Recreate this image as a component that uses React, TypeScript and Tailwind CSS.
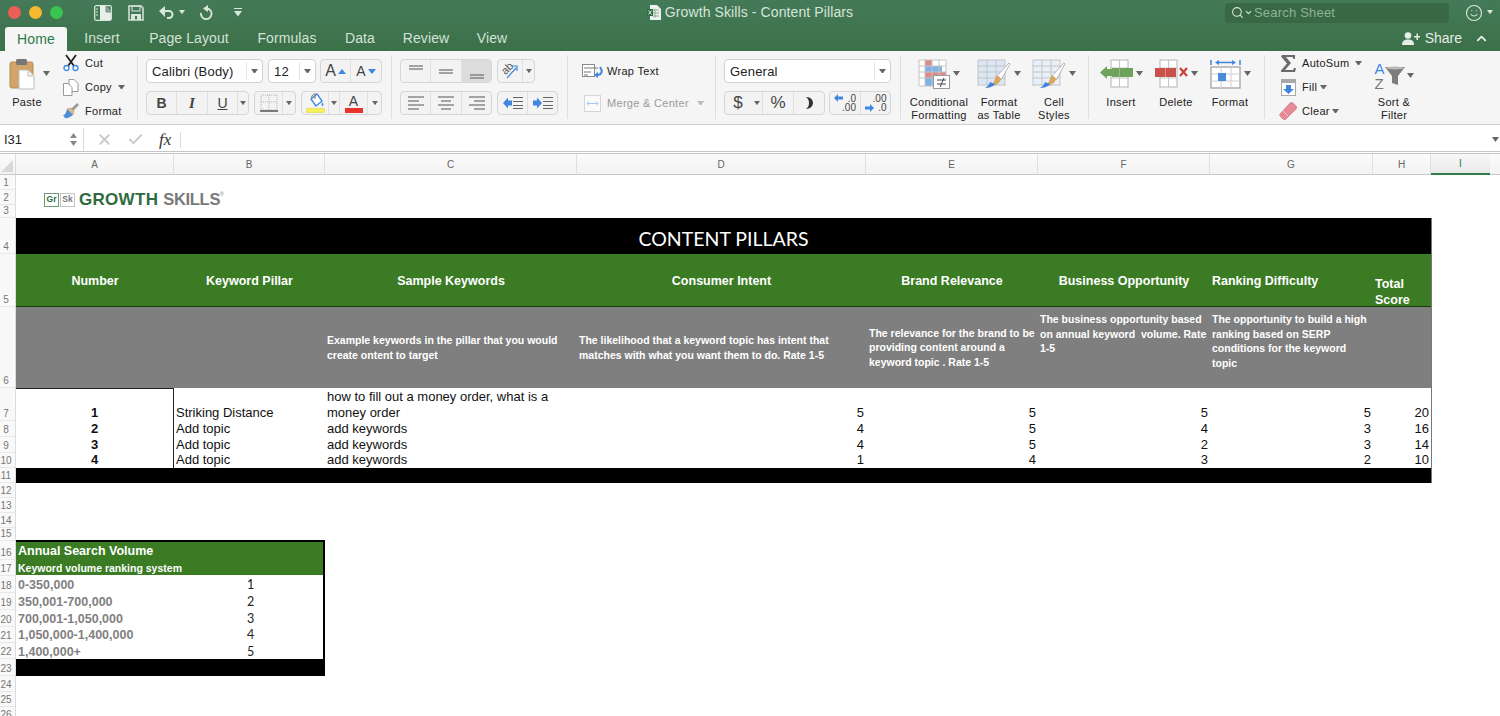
import type { ReactNode } from "react";
import { Search, Smile, ChevronDown, ChevronUp, X, Check } from "lucide-react";

const ui = "font-['Liberation_Sans',Arial,sans-serif]";
const calibri = "font-['Lato','Liberation_Sans',sans-serif]";

function Caret({ color = "#666", w = 7 }: { color?: string; w?: number }) {
  return (
    <svg width={w} height={w * 0.7} viewBox="0 0 10 7" className="shrink-0">
      <path d="M0 0h10L5 7z" fill={color} />
    </svg>
  );
}

function Seg({ className, children }: { className: string; children: ReactNode }) {
  return (
    <div className={`flex h-6 overflow-hidden rounded-[4px] border border-[#d6d6d6] bg-[#f3f3f3] divide-x divide-[#e0e0e0] ${className}`}>
      {children}
    </div>
  );
}

function Cell({ className = "", children }: { className?: string; children?: ReactNode }) {
  return <div className={`flex h-full items-center justify-center ${className}`}>{children}</div>;
}

function Select({ className, label, textClass = "pl-[5px] pt-px" }: { className: string; label: string; textClass?: string }) {
  return (
    <div className={`flex h-6 items-center rounded-[4px] border border-[#d0d0d0] bg-white ${className}`}>
      <span className={`flex-1 text-[13px] tracking-[0.2px] text-[#222] ${textClass}`}>{label}</span>
      <div className="flex h-[18px] w-4 items-center justify-center border-l border-[#e6e6e6]">
        <Caret />
      </div>
    </div>
  );
}

function Lines({ rows, color = "#555" }: { rows: number[][]; color?: string }) {
  return (
    <svg width="18" height="16" viewBox="0 0 18 16">
      {rows.map((r, i) => (
        <line key={i} x1={r[0]} x2={r[1]} y1={r[2]} y2={r[2]} stroke={color} strokeWidth="1.2" />
      ))}
    </svg>
  );
}

function IndentIcon({ increase }: { increase?: boolean }) {
  return (
    <svg width="22" height="14" viewBox="0 0 22 14">
      {[1.5, 5.5, 9.5, 12.5].map((y) => (
        <line key={y} x1="11" x2="21" y1={y} y2={y} stroke="#666" strokeWidth="1.2" />
      ))}
      <path d={increase ? "M1 4.500h4V1.500L10 7l-5 5.500V9.500H1z" : "M10 4.500H6V1.500L1 7l5 5.500V9.500h4z"} fill="#3f86e0" />
    </svg>
  );
}

function PasteIcon() {
  return (
    <svg width="27" height="32" viewBox="0 0 27 32">
      <rect x="1" y="4" width="23" height="26" rx="2" fill="#d2a468" stroke="#b48a52" />
      <rect x="7" y="1" width="11" height="6" rx="1.5" fill="#77777a" />
      <path d="M10 12h9l6 6v13H10z" fill="#fff" stroke="#bdbdbd" />
      <path d="M19 12v6h6" fill="#eee" stroke="#bdbdbd" />
    </svg>
  );
}

function ScissorsIcon() {
  return (
    <svg width="16" height="18" viewBox="0 0 16 18">
      <path d="M3 1l8 11M13 1L5 12" stroke="#222" strokeWidth="1.8" />
      <circle cx="3.5" cy="14" r="2.5" fill="none" stroke="#3f86e0" strokeWidth="1.3" />
      <circle cx="12.5" cy="14" r="2.5" fill="none" stroke="#3f86e0" strokeWidth="1.3" />
    </svg>
  );
}

function CopyIcon() {
  return (
    <svg width="16" height="17" viewBox="0 0 16 17" fill="#fff" stroke="#9a9a9a">
      <path d="M6 .5h5l4 4v8H6z" />
      <path d="M.5 4.500H5l4 4v8H.5z" />
    </svg>
  );
}

function BrushIcon() {
  return (
    <svg width="18" height="18" viewBox="0 0 18 18">
      <path d="M9 7l6-6 2 2-6 6z" fill="#9a9a9a" />
      <path d="M5 7l4-1 3 3-1 4z" fill="#d9ba8c" stroke="#b08d5c" strokeWidth=".5" />
      <path d="M1 13c2 0 3-2 4-6l6 6c-3 2-6 4-8 3z" fill="#4f8fd8" />
    </svg>
  );
}

function BordersIcon() {
  return (
    <svg width="18" height="18" viewBox="0 0 18 18">
      <path d="M1 1h16v15H1zM9 1v15M1 8h16" fill="none" stroke="#b5b5b5" strokeDasharray="1 1" />
      <path d="M0 17h18" stroke="#555" strokeWidth="1.4" />
    </svg>
  );
}

function FillIcon() {
  return (
    <svg width="19" height="20" viewBox="0 0 19 20">
      <path d="M5 6l6-5 5 7-6 5z" fill="#fff" stroke="#3f86e0" strokeWidth="1.3" />
      <path d="M8 1c-2 1-3 3-2 5M9 0v6" fill="none" stroke="#777" />
      <path d="M16 9c1 1 2 3 1 4s-2-2-1-4z" fill="#3f86e0" />
      <rect x=".5" y="15.500" width="18" height="4" fill="#f6f05c" stroke="#dcd64a" strokeWidth=".6" />
    </svg>
  );
}

function WrapIcon() {
  return (
    <svg width="22" height="14" viewBox="0 0 22 14">
      <rect x=".5" y=".5" width="12" height="12" fill="#fff" stroke="#8a8a8a" />
      <path d="M2 4h14M2 8h7M2 11h4" stroke="#777" />
      <path d="M18 3c3 4 2 8-3 8" fill="none" stroke="#3f86e0" strokeWidth="2" />
      <path d="M16 8v6l-4-3z" fill="#3f86e0" />
    </svg>
  );
}

function MergeIcon() {
  return (
    <svg width="17" height="17" viewBox="0 0 17 17">
      <rect x=".5" y=".5" width="16" height="16" fill="#fbfbfb" stroke="#d5d5d5" />
      <path d="M3 8.500h11M5 6.500l-2 2 2 2M12 6.500l2 2-2 2" fill="none" stroke="#a9c8ec" />
    </svg>
  );
}

function CommaIcon() {
  return (
    <svg width="9" height="14" viewBox="0 0 9 14">
      <path d="M1 1c5 0 7 3 7 6s-3 6-7 6c2-2 3-3 3-6S3 3 1 1z" fill="#333" />
    </svg>
  );
}

function DecimalIcon({ more }: { more?: boolean }) {
  return (
    <div className="relative flex h-[18px] w-[22px] flex-col items-end text-[10px] leading-[9px] text-[#444]">
      <span>{more ? ".0" : ".00"}</span>
      <span>{more ? ".00" : ".0"}</span>
      <svg width="9" height="8" viewBox="0 0 9 8" className={`absolute left-0 ${more ? "top-0" : "bottom-0"}`}>
        <path d={more ? "M9 2.500H4V0L0 4l4 4V5.500h5z" : "M0 2.500h5V0l4 4-4 4V5.500H0z"} fill="#3f86e0" />
      </svg>
    </div>
  );
}

function GridBase({ cols, rows }: { cols: number[]; rows: number[] }) {
  return (
    <>
      {cols.map((x) => (
        <line key={`c${x}`} x1={x} x2={x} y1="1" y2="27" stroke="#c4c4c4" />
      ))}
      {rows.map((y) => (
        <line key={`r${y}`} y1={y} y2={y} x1="1" x2="28" stroke="#c4c4c4" />
      ))}
    </>
  );
}

function CondIcon() {
  return (
    <svg width="32" height="30" viewBox="0 0 32 30">
      <rect x="1" y="1" width="27" height="26" fill="#fff" />
      <rect x="7" y="1" width="7" height="6" fill="#dc8a8a" />
      <rect x="7" y="7" width="17" height="6" fill="#7fb0e8" />
      <rect x="7" y="13" width="21" height="6" fill="#dc8a8a" />
      <rect x="7" y="19" width="10" height="8" fill="#7fb0e8" />
      <GridBase cols={[1, 7, 14, 21, 28]} rows={[1, 7, 13, 19, 27]} />
      <rect x="15.5" y="16.5" width="16" height="13" fill="#fff" stroke="#9a9a9a" />
      <path d="M19 21h9M19 25h9M26 19l-4 9" stroke="#444" strokeWidth="1" fill="none" />
    </svg>
  );
}

function TableBrushIcon({ fill }: { fill: string }) {
  return (
    <svg width="34" height="30" viewBox="0 0 34 30">
      <rect x="1" y="1" width="27" height="25" fill={fill} />
      <GridBase cols={[1, 10, 19, 28]} rows={[1, 7, 13, 19, 26]} />
      <path d="M20 17L32 4l1 1-9 16z" fill="#fff" stroke="#999" strokeWidth=".7" />
      <path d="M19 17c2-1 4 1 5 3-1 4-4 5-6 6l-7 3c4-2 6-6 8-12z" fill="#d9a860" />
      <path d="M8 29c3 0 8-1 10-4l-5-2c-1 3-3 5-5 6z" fill="#3f86e0" />
    </svg>
  );
}

function InsertIcon() {
  return (
    <svg width="33" height="29" viewBox="0 0 33 29">
      <rect x="11" y="1" width="17" height="27" fill="#fff" stroke="#b5b5b5" />
      <path d="M11 9h17M11 19h17M19.500 1v27" stroke="#c4c4c4" />
      <rect x="12" y="9" width="21" height="9" fill="#6fa35c" />
      <path d="M19.500 9v9" stroke="#8fbf7f" />
      <path d="M0 13.500L7 7v13z" fill="#6fa35c" />
      <rect x="7" y="10" width="5" height="7" fill="#6fa35c" />
    </svg>
  );
}

function DeleteIcon() {
  return (
    <svg width="33" height="29" viewBox="0 0 33 29">
      <rect x="5" y="1" width="17" height="27" fill="#fff" stroke="#b5b5b5" />
      <path d="M5 9h17M5 19h17M13.500 1v27" stroke="#c4c4c4" />
      <rect x="0" y="9" width="21" height="9" fill="#c9504b" />
      <path d="M10.500 9v9" stroke="#e08a86" />
      <path d="M25 9l7 8M32 9l-7 8" stroke="#c9403b" strokeWidth="2.200" />
    </svg>
  );
}

function FormatIcon() {
  return (
    <svg width="31" height="30" viewBox="0 0 31 30">
      <rect x="1" y="8" width="29" height="21" fill="#fff" stroke="#a9a9a9" strokeWidth="1.400" />
      <path d="M11 8v21M21 8v21M1 15h29M1 22h29" stroke="#d0d0d0" />
      <rect x="8" y="14" width="8" height="8" fill="#4a8ad8" />
      <path d="M1 1v5M30 1v5M8 3.500h15" stroke="#3f86e0" strokeWidth="1.500" />
      <path d="M5 3.500L9 1v5zM26 3.500L22 1v5z" fill="#3f86e0" />
    </svg>
  );
}

function SumIcon() {
  return (
    <svg width="15" height="17" viewBox="0 0 15 17">
      <path d="M1 0h13v4h-1.500l-1-2H5l5 6-6 7h8l1-2H15l-1 4H0v-1.500L6 8.500 0 1.500z" fill="#6b6b6b" />
    </svg>
  );
}

function FillDownIcon() {
  return (
    <svg width="15" height="17" viewBox="0 0 15 17">
      <rect x=".5" y=".5" width="14" height="16" fill="#fff" stroke="#a9a9a9" />
      <rect x="1" y="1" width="13" height="3" fill="#a9a9a9" />
      <path d="M5 6h5v4h3l-5.500 5L2 10h3z" fill="#3f86e0" />
    </svg>
  );
}

function EraserIcon() {
  return (
    <svg width="18" height="18" viewBox="0 0 18 18">
      <path d="M1 12L11 1c1-1 2-1 3 0l3 3c1 1 1 2 0 3L7 17c-1 1-2 1-3 0l-3-3c-.500-.500-.500-1.500 0-2z" fill="#e58a96" stroke="#c86a76" strokeWidth=".6" />
      <path d="M4 9l5 5" stroke="#f6c4ca" />
    </svg>
  );
}

function FunnelIcon() {
  return (
    <svg width="20" height="20" viewBox="0 0 20 20">
      <path d="M0 1h20l-7 9v9l-6-2v-7z" fill="#7d7d7d" />
      <ellipse cx="10" cy="2" rx="9" ry="1.500" fill="#b9b9b9" />
    </svg>
  );
}

function SidebarIcon() {
  return (
    <svg width="18" height="16" viewBox="0 0 18 16">
      <rect x=".7" y=".7" width="16.600" height="14.600" rx="1.500" fill="none" stroke="#d9e6dc" strokeWidth="1.300" />
      <path d="M6 1v14h11V7l-5-6z" fill="#e6efe8" />
      <path d="M12 1v6h5" fill="#8fae98" stroke="#4a7a5a" strokeWidth=".7" />
      <path d="M2 4h2M2 7h2M2 10h2" stroke="#d9e6dc" />
    </svg>
  );
}

function SaveIcon() {
  return (
    <svg width="16" height="16" viewBox="0 0 16 16">
      <path d="M1 1h12l2 2v12H1z" fill="none" stroke="#d9e6dc" strokeWidth="1.500" />
      <rect x="4" y="1" width="8" height="5" fill="none" stroke="#d9e6dc" />
      <path d="M3 9h10v6H3zM7 11v4h2v-4z" fill="#d9e6dc" fillRule="evenodd" />
    </svg>
  );
}

function UndoIcon() {
  return (
    <svg width="16" height="14" viewBox="0 0 16 14" fill="none">
      <path d="M4 5h6a3.500 3.500 0 0 1 0 7H8" stroke="#d9e6dc" strokeWidth="2" />
      <path d="M6 0v11L0 5z" fill="#d9e6dc" />
    </svg>
  );
}

function RedoIcon() {
  return (
    <svg width="14" height="15" viewBox="0 0 14 15" fill="none">
      <path d="M8 3.500a5.300 5.300 0 1 1-6 4.500" stroke="#d9e6dc" strokeWidth="1.800" />
      <path d="M9 0L4 3.500 9 7z" fill="#d9e6dc" />
    </svg>
  );
}

function ExcelDocIcon() {
  return (
    <svg width="14" height="15" viewBox="0 0 14 15">
      <path d="M3 0h7l4 4v11H3z" fill="#eef2ee" />
      <path d="M5 5h7M5 8h7M5 11h7M8 4v9" stroke="#8cae96" />
      <rect x="0" y="4" width="6" height="7" fill="#2f6f42" />
      <path d="M1.500 5.500l3 4M4.500 5.500l-3 4" stroke="#fff" strokeWidth=".8" />
    </svg>
  );
}

function ShareIcon() {
  return (
    <svg width="18" height="13" viewBox="0 0 18 13" fill="#e4ede6">
      <circle cx="6" cy="3.500" r="3.300" />
      <path d="M0 13c0-4 2-5.500 6-5.500s6 1.500 6 5.500z" />
      <path d="M12 4h2.500V1.500h1.500V4H18v1.500h-2V8h-1.500V5.500H12z" />
    </svg>
  );
}

function LargeBtn({ className, icon, lines, caret = true }: { className: string; icon: ReactNode; lines: string[]; caret?: boolean }) {
  return (
    <div className={`flex flex-col items-center ${className}`}>
      <div className="flex h-[33px] items-center gap-[3px]">
        {icon}
        {caret && <Caret />}
      </div>
      <div className="mt-[6px] whitespace-nowrap text-center text-[11px] leading-[13px] tracking-[0.3px] text-[#222]">
        {lines.map((l) => (
          <div key={l}>{l}</div>
        ))}
      </div>
    </div>
  );
}

function ListBtn({ icon, label, caret }: { icon: ReactNode; label: string; caret: string }) {
  return (
    <div className="flex h-6 items-center">
      <div className="flex w-[24px] justify-center">{icon}</div>
      <span className="ml-[2px] text-[11px] tracking-[0.3px] text-[#222]">{label}</span>
      <div className={caret}>
        <Caret />
      </div>
    </div>
  );
}

function Sep() {
  return <div className="mt-1 h-16 w-px shrink-0 bg-[#dfdfdf]" />;
}

function Ribbon() {
  return (
    <div className="flex h-[74px] border-b border-[#cfcfcf] bg-[#f5f5f5]">
      <div className="flex w-[137px] shrink-0">
        <LargeBtn
          className="ml-[8px] w-[38px] pt-[6px]"
          icon={<div className="mr-[9px] flex"><PasteIcon /></div>}
          lines={["Paste"]}
          caret={false}
        />
        <div className="mt-[20px] ml-[-3px]">
          <Caret />
        </div>
        <div className="ml-[9px] flex flex-col">
          <ListBtn icon={<ScissorsIcon />} label="Cut" caret="hidden" />
          <ListBtn icon={<CopyIcon />} label="Copy" caret="ml-[6px]" />
          <ListBtn icon={<BrushIcon />} label="Format" caret="hidden" />
        </div>
      </div>
      <Sep />

      <div className="flex w-[253px] shrink-0 flex-col gap-2 pt-2 pl-2">
        <div className="flex">
          <Select className="w-[117px]" label="Calibri (Body)" />
          <Select className="ml-[5px] w-[48px]" label="12" />
          <Seg className="ml-1 w-[62px]">
            <Cell className="w-[31px] gap-[2px] text-[16px] text-[#444]">
              A
              <svg width="8" height="5" viewBox="0 0 8 5"><path d="M0 5h8L4 0z" fill="#3f86e0" /></svg>
            </Cell>
            <Cell className="w-[31px] gap-[2px] text-[14px] text-[#444]">
              A
              <svg width="8" height="5" viewBox="0 0 8 5"><path d="M0 0h8L4 5z" fill="#3f86e0" /></svg>
            </Cell>
          </Seg>
        </div>
        <div className="flex">
          <Seg className="w-[103px]">
            <Cell className="w-[30px] text-[14px] font-bold text-[#444]">B</Cell>
            <Cell className="w-[31px] font-['Liberation_Serif',serif] text-[15px] font-bold italic text-[#444]">I</Cell>
            <Cell className="w-[30px] text-[14px] text-[#444] underline">U</Cell>
            <Cell className="flex-1"><Caret w={6} /></Cell>
          </Seg>
          <Seg className="ml-[5px] w-[42px]">
            <Cell className="w-[28px]"><BordersIcon /></Cell>
            <Cell className="flex-1"><Caret w={6} /></Cell>
          </Seg>
          <Seg className="ml-[5px] w-[81px]">
            <Cell className="w-[27px]"><FillIcon /></Cell>
            <Cell className="w-[11px]"><Caret w={6} /></Cell>
            <Cell className="w-[28px]">
              <div className="flex flex-col items-center text-[14px] leading-[14px] text-[#444]">
                A
                <div className="h-[5px] w-[18px] bg-[#e8322a]" />
              </div>
            </Cell>
            <Cell className="flex-1"><Caret w={6} /></Cell>
          </Seg>
        </div>
      </div>
      <Sep />

      <div className="flex w-[175px] shrink-0 flex-col gap-2 pt-2 pl-2">
        <div className="flex">
          <Seg className="w-[92px]">
            <Cell className="w-[30px]"><Lines rows={[[2, 16, 3], [2, 16, 6]]} /></Cell>
            <Cell className="w-[31px]"><Lines rows={[[2, 16, 7], [2, 16, 10]]} /></Cell>
            <Cell className="flex-1 bg-[#dcdcdc]"><Lines rows={[[2, 16, 12], [2, 16, 15]]} /></Cell>
          </Seg>
          <Seg className="ml-[5px] w-[38px]">
            <Cell className="w-[25px]">
              <div className="relative h-4 w-4">
                <span className="absolute top-[-3px] left-[-1px] -rotate-45 text-[11px] text-[#555]">ab</span>
                <svg width="16" height="16" viewBox="0 0 16 16" className="absolute top-0 left-0">
                  <path d="M5 15L14 5M10 3h5v5" fill="none" stroke="#3f86e0" strokeWidth="1.200" />
                </svg>
              </div>
            </Cell>
            <Cell className="flex-1"><Caret w={6} /></Cell>
          </Seg>
        </div>
        <div className="flex">
          <Seg className="w-[92px]">
            <Cell className="w-[30px]"><Lines rows={[[1, 17, 2], [1, 12, 6], [1, 17, 10], [1, 12, 14]]} /></Cell>
            <Cell className="w-[31px]"><Lines rows={[[1, 17, 2], [4, 14, 6], [1, 17, 10], [4, 14, 14]]} /></Cell>
            <Cell className="flex-1"><Lines rows={[[1, 17, 2], [6, 17, 6], [1, 17, 10], [6, 17, 14]]} /></Cell>
          </Seg>
          <Seg className="ml-[5px] w-[61px]">
            <Cell className="w-[30px]"><IndentIcon /></Cell>
            <Cell className="flex-1"><IndentIcon increase /></Cell>
          </Seg>
        </div>
      </div>
      <Sep />

      <div className="flex w-[147px] shrink-0 flex-col gap-2 pt-2 pl-[14px]">
        <div className="flex h-6 items-center gap-[3px] text-[11px] tracking-[0.3px] text-[#222]">
          <WrapIcon />
          Wrap Text
        </div>
        <div className="flex h-6 items-center text-[11px] tracking-[0.3px] text-[#9b9b9b]">
          <div className="ml-[2px] mr-[6px] flex"><MergeIcon /></div>
          Merge &amp; Center
          <div className="ml-[8px]"><Caret color="#bbb" /></div>
        </div>
      </div>
      <Sep />

      <div className="flex w-[184px] shrink-0 flex-col gap-2 pt-2 pl-2">
        <Select className="w-[167px]" label="General" />
        <div className="flex">
          <Seg className="w-[101px]">
            <Cell className="w-[26px] border-r-0 text-[17px] text-[#444]">$</Cell>
            <Cell className="w-[12px]"><Caret w={6} /></Cell>
            <Cell className="w-[31px] text-[17px] text-[#444]">%</Cell>
            <Cell className="flex-1"><CommaIcon /></Cell>
          </Seg>
          <Seg className="ml-1 w-[62px]">
            <Cell className="w-[31px]"><DecimalIcon more /></Cell>
            <Cell className="flex-1"><DecimalIcon /></Cell>
          </Seg>
        </div>
      </div>
      <Sep />

      <div className="flex w-[187px] shrink-0 pt-[6px] pl-[7px]">
        <LargeBtn className="w-[62px]" icon={<CondIcon />} lines={["Conditional", "Formatting"]} />
        <LargeBtn className="w-[58px]" icon={<TableBrushIcon fill="#dbe7f5" />} lines={["Format", "as Table"]} />
        <LargeBtn className="w-[52px]" icon={<TableBrushIcon fill="#e8f0fa" />} lines={["Cell", "Styles"]} />
      </div>
      <Sep />

      <div className="flex w-[175px] shrink-0 pt-[6px] pl-[7px]">
        <LargeBtn className="w-[50px]" icon={<InsertIcon />} lines={["Insert"]} />
        <LargeBtn className="w-[60px]" icon={<DeleteIcon />} lines={["Delete"]} />
        <LargeBtn className="w-[48px]" icon={<FormatIcon />} lines={["Format"]} />
      </div>
      <Sep />

      <div className="flex flex-1">
        <div className="ml-[11px] flex w-[96px] flex-col">
          <ListBtn icon={<SumIcon />} label="AutoSum" caret="ml-[6px]" />
          <ListBtn icon={<FillDownIcon />} label="Fill" caret="ml-[3px]" />
          <ListBtn icon={<EraserIcon />} label="Clear" caret="ml-[2px]" />
        </div>
        <div className="flex w-[44px] flex-col items-center pt-[10px]">
          <div className="flex h-[29px] items-center">
            <div className="flex flex-col text-[15px] leading-[15px]">
              <span className="text-[#3f86e0]">A</span>
              <span className="text-[#777]">Z</span>
            </div>
            <FunnelIcon />
            <div className="ml-[2px]"><Caret /></div>
          </div>
          <div className="mt-[6px] whitespace-nowrap text-center text-[11px] leading-[13px] tracking-[0.3px] text-[#222]">
            <div>Sort &amp;</div>
            <div>Filter</div>
          </div>
        </div>
      </div>
    </div>
  );
}

const tabs = [
  ["Insert", "ml-[2px] w-[66px]"],
  ["Page Layout", "w-[108px]"],
  ["Formulas", "w-[88px]"],
  ["Data", "w-[58px]"],
  ["Review", "w-[74px]"],
  ["View", "w-[58px]"],
];

function TitleArea() {
  return (
    <div className="h-[51px] bg-linear-to-b from-[#447a58] to-[#3b7048]">
      <div className="grid h-[25px] grid-cols-[1fr_auto_1fr] items-center">
        <div className="flex items-center">
          <div className="ml-2 h-[13px] w-[13px] rounded-full bg-[#ec5f57]" />
          <div className="ml-2 h-[13px] w-[13px] rounded-full bg-[#f7b92f]" />
          <div className="ml-2 h-[13px] w-[13px] rounded-full bg-[#3cc451]" />
          <div className="ml-[31px] flex"><SidebarIcon /></div>
          <div className="ml-[16px] flex"><SaveIcon /></div>
          <div className="ml-[15px] flex"><UndoIcon /></div>
          <div className="ml-[4px]"><Caret color="#d9e6dc" w={6} /></div>
          <div className="ml-[14px] flex"><RedoIcon /></div>
          <div className="ml-[21px] flex flex-col items-center gap-[2px]">
            <div className="h-px w-[8px] bg-[#d9e6dc]" />
            <Caret color="#d9e6dc" w={8} />
          </div>
        </div>
        <div className="flex items-center gap-[4px] text-[14px] tracking-[0.1px] text-[#d6e4da]">
          <ExcelDocIcon />
          Growth Skills - Content Pillars
        </div>
        <div className="flex items-center justify-end">
          <div className="flex h-5 w-[224px] items-center rounded-[4px] bg-[#386844] pl-[6px] text-[13px] tracking-[0.2px] text-[#8eb39b]">
            <Search size={13} color="#dbe7de" />
            <ChevronDown size={9} color="#dbe7de" strokeWidth={3} />
            <span className="ml-[1px]">Search Sheet</span>
          </div>
          <div className="ml-[16px] flex"><Smile size={18} color="#dbe7de" strokeWidth={1.5} /></div>
          <div className="mr-[7px] ml-[4px]"><Caret color="#dbe7de" w={6} /></div>
        </div>
      </div>
      <div className="flex h-[26px] items-end justify-between">
        <div className="flex h-full items-end pl-[5px]">
          <div className="flex h-[24px] w-[62px] items-center justify-center rounded-t-[3px] bg-[#f5f5f5] text-[14px] tracking-[0.2px] text-[#2f7a4a]">
            Home
          </div>
          {tabs.map(([t, w]) => (
            <div key={t} className={`flex h-[24px] items-center justify-center pb-[2px] text-[14px] tracking-[0.1px] text-[#d3e2d7] ${w}`}>
              {t}
            </div>
          ))}
        </div>
        <div className="flex h-[26px] items-center pr-[11px] text-[14px] text-[#e4ede6]">
          <ShareIcon />
          <span className="ml-[5px]">Share</span>
          <ChevronUp size={15} strokeWidth={3} className="ml-[12px]" />
        </div>
      </div>
    </div>
  );
}

function FormulaBar() {
  return (
    <div className="flex h-[29px] items-center border-b-[3px] border-double border-[#c6c6c6] bg-white pt-[3px]">
      <div className="flex h-full w-[84px] items-center justify-between border-r border-[#d9d9d9] pr-[6px] pl-[4px] text-[13px] text-[#222]">
        I31
        <div className="flex flex-col gap-[3px]">
          <svg width="7" height="5" viewBox="0 0 10 7"><path d="M0 7h10L5 0z" fill="#888" /></svg>
          <Caret color="#888" />
        </div>
      </div>
      <div className="ml-[10px] flex w-[20px] justify-center"><X size={17} color="#c8c8c8" strokeWidth={2.5} /></div>
      <div className="ml-[11px] flex w-[20px] justify-center"><Check size={17} color="#c8c8c8" strokeWidth={2.5} /></div>
      <div className="ml-[12px] w-[23px] pl-[2px] font-['Liberation_Serif',serif] text-[17px] italic text-[#333]">fx</div>
      <div className="h-[16px] w-px bg-[#dcdcdc]" />
      <div className="flex flex-1 justify-end pr-[1px]"><Caret w={7} /></div>
    </div>
  );
}

function ColHeaders() {
  const cols = [
    ["A", "w-[158px]"],
    ["B", "w-[151px]"],
    ["C", "w-[252px]"],
    ["D", "w-[289px]"],
    ["E", "w-[172px]"],
    ["F", "w-[172px]"],
    ["G", "w-[163px]"],
    ["H", "w-[58px]"],
  ];
  return (
    <div className="flex h-[21px] border-b border-[#c9c9c9] bg-linear-to-b from-[#fbfbfb] to-[#f3f3f3] text-[10px] text-[#666]">
      <div className="flex w-4 items-end justify-end border-r border-[#dcdcdc] pr-[2px] pb-[2px]">
        <svg width="12" height="12" viewBox="0 0 12 12"><path d="M12 0v12H0z" fill="#d8d8d8" /></svg>
      </div>
      {cols.map(([c, w]) => (
        <div key={c} className={`flex items-center justify-center border-r border-[#e0e0e0] ${w}`}>{c}</div>
      ))}
      <div className="-mb-px flex w-[59px] items-center justify-center border-b-2 border-[#2f7a4a] bg-linear-to-b from-[#f8f8f8] to-[#e9e9e9] text-[#2f7a4a]">I</div>
    </div>
  );
}

function RowHeaders() {
  const nums = Array.from({ length: 26 }, (_, i) => i + 1);
  return (
    <div className="grid w-4 shrink-0 grid-rows-[15px_15px_13px_36px_53px_81px_33px_16px_16px_15px_15px_15px_15px_15px_13px_19px_16px_17px_17px_17px_16px_16px_17px_16px_15px_15px] border-r border-[#dcdcdc] bg-[#f9f9f9] text-[10px] text-[#777]">
      {nums.map((n) => (
        <div key={n} className="flex items-end justify-center border-b border-[#e8e8e8] pr-[3px] leading-[13px]">{n}</div>
      ))}
    </div>
  );
}

function Logo() {
  return (
    <div className="flex h-[43px] items-center pt-[6px] pl-[28px]">
      <div className="flex h-[14px] w-[15px] items-center justify-center border border-[#6d9c78] text-[8.500px] font-bold text-[#2f6b3f]">Gr</div>
      <div className="ml-px flex h-[14px] w-[15px] items-center justify-center border border-[#c4c4c4] text-[8.500px] font-bold text-[#777]">Sk</div>
      <span className="ml-[4px] text-[17px] font-bold tracking-[0.3px] text-[#2f6b3f]">GROWTH</span>
      <span className="ml-[5px] text-[16.500px] font-bold tracking-[-0.3px] text-[#77797a]">SKILLS</span>
      <span className="mb-[10px] text-[5px] text-[#777]">®</span>
    </div>
  );
}

const green = "flex items-center justify-center whitespace-nowrap bg-[#3a7b24] border-b border-[#1c3c12] pt-[2px] text-[12.500px] font-bold text-white";
const grey = "flex flex-col whitespace-pre bg-[#7f7f7f] pl-[2px] text-[10.500px] font-bold leading-[14.600px] text-white";
const body = "flex items-end bg-white text-[13px] leading-[16px] text-[#111] whitespace-nowrap";
const num = "flex items-end justify-end bg-white pr-[2px] text-[13px] leading-[16px] text-[#111]";

const rows = [
  { n: 1, topic: "Striking Distance", keywords: "money order", vals: [5, 5, 5, 5, 20], first: true },
  { n: 2, topic: "Add topic", keywords: "add keywords", vals: [4, 5, 4, 3, 16] },
  { n: 3, topic: "Add topic", keywords: "add keywords", vals: [4, 5, 2, 3, 14] },
  { n: 4, topic: "Add topic", keywords: "add keywords", vals: [1, 4, 3, 2, 10] },
];

function MainTable() {
  return (
    <div className={`grid w-[1416px] grid-cols-[158px_151px_252px_289px_172px_172px_163px_58px] grid-rows-[36px_53px_81px_33px_16px_16px_15px_15px] border-r border-[#777] ${ui}`}>
      <div className={`col-span-8 flex items-center justify-center bg-black pt-[6px] text-[19.500px] text-white ${calibri}`}>CONTENT PILLARS</div>

      <div className={green}>Number</div>
      <div className={green}>Keyword Pillar</div>
      <div className={green}>Sample Keywords</div>
      <div className={green}>Consumer Intent</div>
      <div className={green}>Brand Relevance</div>
      <div className={green}>Business Opportunity</div>
      <div className={`${green} !justify-start pl-[2px]`}>Ranking Difficulty</div>
      <div className="flex flex-col border-b border-[#1c3c12] bg-[#3a7b24] pt-[22px] pl-[2px] text-[12.500px] font-bold leading-[16px] text-white">
        <span>Total</span>
        <span>Score</span>
      </div>

      <div className="bg-[#7f7f7f]" />
      <div className="bg-[#7f7f7f]" />
      <div className={`${grey} justify-center`}>
        <span>Example keywords in the pillar that you would</span>
        <span>create ontent to target</span>
      </div>
      <div className={`${grey} justify-center`}>
        <span>The likelihood that a keyword topic has intent that</span>
        <span>matches with what you want them to do. Rate 1-5</span>
      </div>
      <div className={`${grey} justify-center !pl-[3px]`}>
        <span>The relevance for the brand to be</span>
        <span>providing content around a</span>
        <span>keyword topic . Rate 1-5</span>
      </div>
      <div className={`${grey} pt-[5px]`}>
        <span>The business opportunity based</span>
        <span>on annual keyword  volume. Rate</span>
        <span>1-5</span>
      </div>
      <div className={`${grey} pt-[5px]`}>
        <span>The opportunity to build a high</span>
        <span>ranking based on SERP</span>
        <span>conditions for the keyword</span>
        <span>topic</span>
      </div>
      <div className="bg-[#7f7f7f]" />

      {rows.map((r) => (
        <div key={r.n} className="contents">
          <div className={`flex items-end justify-center border-r border-[#222] bg-white text-[13px] font-bold leading-[16px] text-[#111] ${r.first ? "border-t" : ""}`}>{r.n}</div>
          <div className={`${body} pl-[2px]`}>{r.topic}</div>
          <div className={`${body} flex-col items-start justify-end pl-[2px]`}>
            {r.first && <span>how to fill out a money order, what is a</span>}
            <span>{r.keywords}</span>
          </div>
          {r.vals.map((v, i) => (
            <div key={i} className={num}>{v}</div>
          ))}
        </div>
      ))}

      <div className="relative col-span-8 bg-black" />
    </div>
  );
}

function VolumeTable() {
  const bands = ["0-350,000", "350,001-700,000", "700,001-1,050,000", "1,050,000-1,400,000", "1,400,000+"];
  return (
    <div className={`mt-[57px] w-[309px] border-t-2 border-r-2 border-black ${ui}`}>
      <div className="flex h-[17px] items-center bg-[#3a7b24] pt-px pl-[2px] text-[12.500px] font-bold text-white">Annual Search Volume</div>
      <div className="flex h-[16px] items-center bg-[#3a7b24] pt-[3px] pl-[2px] text-[10.500px] font-bold text-white">Keyword volume ranking system</div>
      <div className="grid h-[84px] grid-cols-[158px_1fr] grid-rows-5 bg-white">
        {bands.map((b, i) => (
          <div key={b} className="contents">
            <div className="flex items-center pt-[3px] pl-[2px] text-[12.500px] font-bold leading-[14px] text-[#7f7f7f]">{b}</div>
            <div className={`flex items-center pt-[3px] pl-[73px] text-[12.500px] leading-[14px] text-[#222] ${calibri}`}>{i + 1}</div>
          </div>
        ))}
      </div>
      <div className="h-[17px] bg-black" />
    </div>
  );
}

export default function App() {
  return (
    <div className={`h-[716px] w-[1500px] overflow-hidden bg-white ${ui}`}>
      <TitleArea />
      <Ribbon />
      <FormulaBar />
      <ColHeaders />
      <div className="flex">
        <RowHeaders />
        <div className="flex-1">
          <Logo />
          <MainTable />
          <VolumeTable />
        </div>
      </div>
    </div>
  );
}
